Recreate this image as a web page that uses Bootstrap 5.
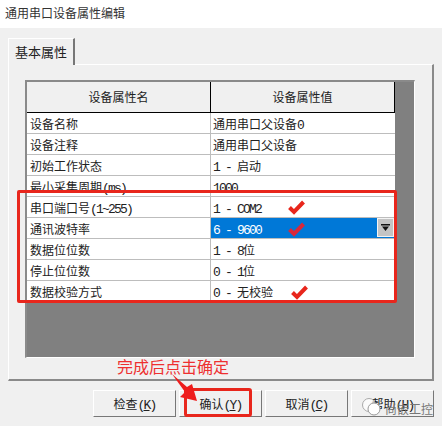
<!DOCTYPE html>
<html lang="zh-CN">
<head>
<meta charset="UTF-8">
<title>通用串口设备属性编辑</title>
<link href="https://cdn.jsdelivr.net/npm/bootstrap@5.3.0/dist/css/bootstrap.min.css" rel="stylesheet">
<style>
html, body { width: 442px; height: 426px; overflow: hidden; }
body { background: #f0f0f0; font-family: "Noto Sans CJK SC", "Liberation Sans", sans-serif; font-size: 12px; color: #222; position: relative; }
.lat { font-family: "Liberation Mono", monospace; font-size: 13px; letter-spacing: -1.8px; white-space: pre; }
.title-strip { height: 28px; background: #fff; padding-left: 5px; line-height: 25px; font-size: 12px; color: #333; }
.dlg-body { padding: 10px 8px 0 8px; }
.tab-head { width: 67px; height: 27px; margin-bottom: -1px; position: relative; z-index: 1; background: #f0f0f0; border: 1px solid #fff; border-right: 2px solid #777; border-bottom: 0; line-height: 25px; text-align: center; font-size: 13px; color: #222; }
.tab-panel { height: 317px; border: 1px solid #fff; border-right: 2px solid #8a8a8a; border-bottom: 2px solid #8a8a8a; padding: 15px 18px 0 16px; }
.grid-box { height: 278px; width: 390px; background: #808080; border-top: 2px solid #8a8a8a; border-left: 2px solid #8a8a8a; border-right: 1px solid #fff; border-bottom: 1px solid #fff; }
.prop-grid { width: 368px; }
.prop-row { height: 21px; background: #fff; border-bottom: 1px solid #bdbdbd; line-height: 21px; font-size: 12px; color: #222; }
.prop-name { width: 184px; padding-left: 3px; border-right: 1px solid #bdbdbd; }
.prop-val { width: 184px; padding-left: 2px; position: relative; }
.head-row { height: 31px; background: #f0f0f0; border-bottom: 1px solid #000; line-height: 30px; text-align: center; font-size: 12px; }
.head-row .prop-name { padding: 0; border-right: 1px solid #000; }
.head-row .prop-val { padding: 0; border-right: 1px solid #000; }
.prop-val.is-selected { background: #0078d7; color: #fff; }
.drop-btn { position: absolute; right: 1px; top: 0; width: 17px; height: 19px; background: #c4c4c4; border: 1px solid #f4f4f4; display: flex; align-items: center; justify-content: center; }
.btn-bar { padding: 9px 0 0 93px; gap: 3px; }
.dlg-btn { width: 83px; height: 27px; padding: 0; background: #f0f0f0; border: 1px solid; border-color: #fff #777 #777 #fff; border-radius: 0; font-size: 12px; line-height: 25px; color: #222; font-family: inherit; }
.dlg-btn u { text-underline-offset: 1px; }
.red-frame { position: absolute; left: 17px; top: 190px; width: 380px; height: 113px; border: 3px solid #e8261c; border-radius: 2px; pointer-events: none; }
.ok-frame { position: absolute; left: 184px; top: 388px; width: 68px; height: 29px; border: 3px solid #e8261c; border-radius: 3px; }
.tick { position: absolute; width: 17px; height: 15px; }
.tick-com { left: 288px; top: 200px; }
.tick-baud { left: 288px; top: 222px; }
.tick-parity { left: 291px; top: 285px; }
.hint-text { position: absolute; left: 117px; top: 355px; font-size: 16px; line-height: 22px; color: #ee3030; white-space: nowrap; }
.hint-arrow { position: absolute; left: 170px; top: 372px; width: 30px; height: 30px; }
.wm-icon { position: absolute; left: 361px; top: 397px; width: 20px; height: 19px; }
.wm-text { position: absolute; left: 385px; top: 399px; font-size: 12px; line-height: 20px; color: #777; white-space: nowrap; }
</style>
</head>
<body>

<div class="title-strip">通用串口设备属性编辑</div>

<div class="dlg-body">
  <div class="tab-head">基本属性</div>
  <div class="tab-panel">
    <div class="grid-box">
      <div class="prop-grid">
        <div class="d-flex head-row"><div class="prop-name">设备属性名</div><div class="prop-val">设备属性值</div></div>
        <div class="d-flex prop-row"><div class="prop-name">设备名称</div><div class="prop-val">通用串口父设备<span class="lat">0</span></div></div>
        <div class="d-flex prop-row"><div class="prop-name">设备注释</div><div class="prop-val">通用串口父设备</div></div>
        <div class="d-flex prop-row"><div class="prop-name">初始工作状态</div><div class="prop-val"><span class="lat">1 - </span>启动</div></div>
        <div class="d-flex prop-row"><div class="prop-name">最小采集周期<span class="lat">(ms)</span></div><div class="prop-val"><span class="lat">1000</span></div></div>
        <div class="d-flex prop-row"><div class="prop-name">串口端口号<span class="lat">(1~255)</span></div><div class="prop-val"><span class="lat">1 - COM2</span></div></div>
        <div class="d-flex prop-row"><div class="prop-name">通讯波特率</div><div class="prop-val is-selected"><span class="lat">6 - 9600</span>
          <span class="drop-btn"><svg width="9" height="7" viewBox="0 0 9 7"><path d="M0 0h9v1.500H0zM1 2.500h7L4.500 7z" fill="#111"/></svg></span></div></div>
        <div class="d-flex prop-row"><div class="prop-name">数据位位数</div><div class="prop-val"><span class="lat">1 - 8</span>位</div></div>
        <div class="d-flex prop-row"><div class="prop-name">停止位位数</div><div class="prop-val"><span class="lat">0 - 1</span>位</div></div>
        <div class="d-flex prop-row"><div class="prop-name">数据校验方式</div><div class="prop-val"><span class="lat">0 - </span>无校验</div></div>
      </div>
    </div>
  </div>
</div>

<div class="d-flex btn-bar">
  <button class="dlg-btn" type="button">检查<span class="lat">(<u>K</u>)</span></button>
  <button class="dlg-btn" type="button">确认<span class="lat">(<u>Y</u>)</span></button>
  <button class="dlg-btn" type="button">取消<span class="lat">(<u>C</u>)</span></button>
  <button class="dlg-btn" type="button">帮助<span class="lat">(<u>H</u>)</span></button>
</div>

<div class="red-frame"></div>
<div class="ok-frame"></div>
<svg class="tick tick-com" viewBox="0 0 17 15"><path d="M1.500 7.500l4.500 4.500L15.500 2" fill="none" stroke="#e8261c" stroke-width="4"/></svg>
<svg class="tick tick-baud" viewBox="0 0 17 15"><path d="M1.500 7.500l4.500 4.500L15.500 2" fill="none" stroke="#d8283a" stroke-width="4"/></svg>
<svg class="tick tick-parity" viewBox="0 0 17 15"><path d="M1.500 7.500l4.500 4.500L15.500 2" fill="none" stroke="#e8261c" stroke-width="4"/></svg>
<div class="hint-text">完成后点击确定</div>
<svg class="hint-arrow" viewBox="0 0 30 30"><path d="M2 2L17 15l5-3 5 17-17-4 5-5z" fill="#ee1c1c"/></svg>
<svg class="wm-icon" viewBox="0 0 20 19"><circle cx="8" cy="8" r="6.500" fill="#fff" fill-opacity=".7" stroke="#aaa"/><circle cx="13" cy="12" r="6" fill="#fff" stroke="#999"/></svg>
<div class="wm-text">尚嵌工控</div>

</body>
</html>
